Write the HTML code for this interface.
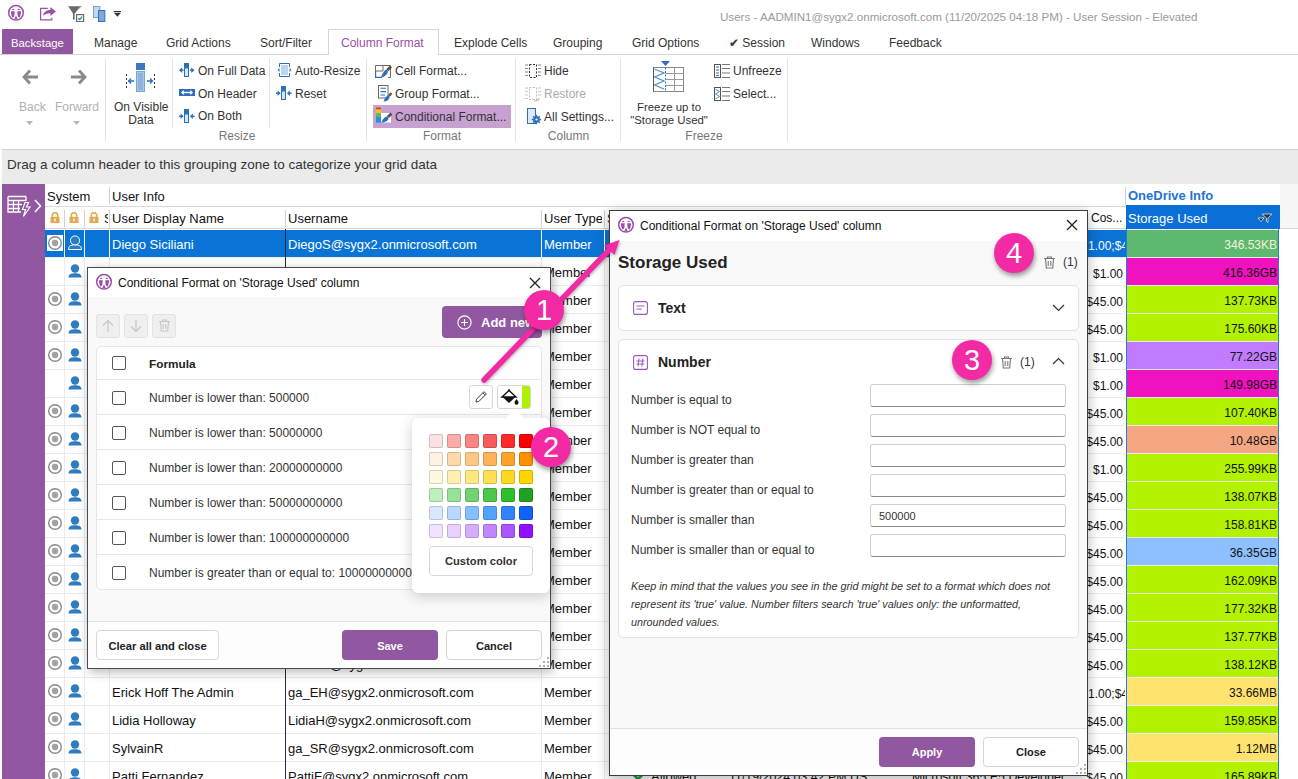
<!DOCTYPE html>
<html><head><meta charset="utf-8">
<style>
*{box-sizing:border-box;margin:0;padding:0}
html,body{width:1298px;height:779px;overflow:hidden;background:#fff;font-family:"Liberation Sans",sans-serif;color:#222}
.a{position:absolute;white-space:nowrap}
.t{position:absolute;white-space:nowrap;line-height:16px}
#title{left:720px;top:9px;font-size:11.6px;color:#9a9a9a}
.tab{position:absolute;top:35px;font-size:12px;color:#333;line-height:16px}
.rb{font-size:12px;color:#333;line-height:16px}
.gl{font-size:12px;color:#777;line-height:16px}
.sep{position:absolute;top:58px;width:1px;height:84px;background:#e2e2e2}
.grow{position:absolute;left:45px;width:1235px;height:28px;border-bottom:1px solid #e6e6e6}
.cell{position:absolute;top:0;height:28px;line-height:32px;font-size:13px;color:#111;white-space:nowrap;overflow:hidden}
.vl{position:absolute;top:0;width:1px;height:28px;background:#e6e6e6}
</style></head><body>

<!-- title bar -->
<div id="title" class="t">Users - AADMIN1@sygx2.onmicrosoft.com (11/20/2025 04:18 PM) - User Session - Elevated</div>

<!-- tabs -->
<div class="a" style="left:0;top:54px;width:1298px;height:1px;background:#d6d6d6"></div>
<div class="a" style="left:2px;top:29px;width:71px;height:25px;background:#9157a0"></div>
<div class="tab" style="left:11px;color:#fff;font-size:11.3px">Backstage</div>
<div class="tab" style="left:94px">Manage</div>
<div class="tab" style="left:166px">Grid Actions</div>
<div class="tab" style="left:260px">Sort/Filter</div>
<div class="a" style="left:328px;top:29px;width:111px;height:26px;background:#fff;border:1px solid #d6d6d6;border-bottom:none"></div>
<div class="tab" style="left:341px;color:#9b4fa8">Column Format</div>
<div class="tab" style="left:454px">Explode Cells</div>
<div class="tab" style="left:553px">Grouping</div>
<div class="tab" style="left:632px">Grid Options</div>
<div class="tab" style="left:729px">&#10004; Session</div>
<div class="tab" style="left:811px">Windows</div>
<div class="tab" style="left:889px">Feedback</div>

<!-- ribbon -->
<!-- quick access -->
<svg class="a" style="left:7px;top:4px" width="18" height="18" viewBox="0 0 18 18"><circle cx="9" cy="8.8" r="7.3" fill="none" stroke="#9b4fa8" stroke-width="1.5"/><g fill="#9b4fa8"><path d="M4.8 6 Q6.2 3.4 7.6 6Z M10.4 6 Q11.8 3.4 13.2 6Z"/><path d="M3.9 7.2 H7.8 L7.3 11.8 Q6.7 13.6 5.6 13.6 Q4.3 12.2 3.9 7.2Z M14.1 7.2 H10.2 L10.7 11.8 Q11.3 13.6 12.4 13.6 Q13.7 12.2 14.1 7.2Z"/><path d="M9 11.6 L10.6 15.1 H7.4Z"/></g></svg>
<svg class="a" style="left:40px;top:7px" width="17" height="14" viewBox="0 0 17 14"><path d="M0.6 1.4 H7.8 M0.6 0.9 V12.8 H11.8 V10.8" fill="none" stroke="#9b4fa8" stroke-width="1.2"/><path d="M2.8 9 C3.8 4.6 6.8 2.9 10.4 2.9 V0.1 L15.9 4.5 L10.4 9.1 V6.3 C7.4 6.3 5 6.9 2.8 9Z" fill="#9b4fa8"/></svg>
<svg class="a" style="left:68px;top:6px" width="17" height="16" viewBox="0 0 17 16"><path d="M0.2 0.2 H13.8 L6.6 7.5 V13.6 H5 V7.5 Z" fill="#6a6a6a"/><path d="M12.2 0.9 L13 0.9 L8.6 5.6 L8 5.6Z" fill="#fff"/><rect x="8.6" y="8.6" width="7" height="7" fill="#fff" stroke="#6a6a6a" stroke-width="1.2"/><path d="M10.2 12.2 L11.7 13.6 L14.2 10.6" fill="none" stroke="#1a9a60" stroke-width="1.4"/></svg>
<svg class="a" style="left:93px;top:6px" width="13" height="16" viewBox="0 0 13 16"><rect x="0.5" y="0.5" width="6.3" height="11" fill="#c5d6ec" stroke="#74a3da"/><rect x="5.5" y="4.5" width="6.3" height="11" fill="#7fa7da" stroke="#2f73c0"/></svg>
<svg class="a" style="left:113px;top:11px" width="9" height="7" viewBox="0 0 9 7"><rect x="0.7" y="0" width="7.3" height="1" fill="#333"/><path d="M0.9 1.8 H7.9 L4.4 5.8Z" fill="#333"/></svg>

<!-- ribbon: back/forward -->
<svg class="a" style="left:22px;top:69px" width="17" height="16" viewBox="0 0 17 16"><path d="M8 1.5 L2 8 L8 14.5 M2.5 8 H16" fill="none" stroke="#8a8a8a" stroke-width="2.8"/></svg>
<svg class="a" style="left:70px;top:69px" width="17" height="16" viewBox="0 0 17 16"><path d="M9 1.5 L15 8 L9 14.5 M14.5 8 H1" fill="none" stroke="#8a8a8a" stroke-width="2.8"/></svg>
<div class="t rb" style="left:19px;top:99px;color:#b4aeb4">Back</div>
<div class="t rb" style="left:55px;top:99px;color:#b4aeb4">Forward</div>
<svg class="a" style="left:26px;top:121px" width="7" height="4"><path d="M0 0 H7 L3.5 4Z" fill="#b8b8b8"/></svg>
<svg class="a" style="left:73px;top:121px" width="7" height="4"><path d="M0 0 H7 L3.5 4Z" fill="#b8b8b8"/></svg>
<div class="sep" style="left:105px"></div>

<!-- on visible data -->
<svg class="a" style="left:125px;top:62px" width="32" height="30" viewBox="0 0 32 30"><rect x="11" y="1" width="9" height="7" fill="#3a78c0"/><rect x="11.5" y="9.5" width="8" height="20" fill="#a9c5e8" stroke="#7aa5d8"/><rect x="13" y="11" width="5" height="17" fill="#8fb2de"/><path d="M1.5 12 V27" stroke="#333" stroke-width="1" stroke-dasharray="2 2"/><path d="M29.5 12 V27" stroke="#333" stroke-width="1" stroke-dasharray="2 2"/><path d="M4 19 H9 M6 16.5 L3.5 19 L6 21.5 M22 19 H27 M25 16.5 L27.5 19 L25 21.5" fill="none" stroke="#2d6fb8" stroke-width="1.3"/></svg>
<div class="t rb" style="left:114px;top:99px;width:54px;text-align:center">On Visible</div>
<div class="t rb" style="left:114px;top:112px;width:54px;text-align:center">Data</div>
<div class="sep" style="left:172px;top:58px;height:70px"></div>

<!-- resize group -->
<svg class="a" style="left:179px;top:63px" width="16" height="14" viewBox="0 0 16 14"><rect x="5.5" y="0.5" width="4" height="13" fill="#d2e8f8" stroke="#2d6fb8"/><rect x="5" y="0" width="5" height="5.5" fill="#2d6fb8"/><path d="M0 7.3 L3.2 4.5 V10.1Z M15.5 7.3 L12.3 4.5 V10.1Z" fill="#2d6fb8"/><path d="M2.5 7.3 H4.5 M11 7.3 H13" stroke="#2d6fb8" stroke-width="1.6"/></svg>
<div class="t rb" style="left:198px;top:63px">On Full Data</div>
<svg class="a" style="left:179px;top:89px" width="16" height="7" viewBox="0 0 16 7"><rect x="0" y="0" width="16" height="7" fill="#2d6fb8"/><path d="M3.5 3.5 H12.5" stroke="#fff" stroke-width="1.4"/><path d="M2 3.5 L4.8 1 V6Z M14 3.5 L11.2 1 V6Z" fill="#fff"/></svg>
<div class="t rb" style="left:198px;top:86px">On Header</div>
<svg class="a" style="left:179px;top:109px" width="16" height="14" viewBox="0 0 16 14"><rect x="5.5" y="0.5" width="4" height="13" fill="#d2e8f8" stroke="#2d6fb8"/><rect x="5" y="0" width="5" height="5.5" fill="#2d6fb8"/><path d="M4.6 7.3 L1.6 4.5 V10.1Z M10.9 7.3 L13.9 4.5 V10.1Z" fill="#2d6fb8"/><path d="M0 7.3 H2.5 M13 7.3 H15.5" stroke="#2d6fb8" stroke-width="1.6"/></svg>
<div class="t rb" style="left:198px;top:108px">On Both</div>
<div class="sep" style="left:269px;top:58px;height:70px"></div>
<svg class="a" style="left:277px;top:63px" width="15" height="14" viewBox="0 0 15 14"><path d="M2.5 4 V0.5 H12.5 V4 M2.5 10 V13.5 H12.5 V10" fill="none" stroke="#2d6fb8" stroke-width="1"/><rect x="4" y="2" width="7" height="10" fill="#bcd6f0"/><path d="M0.5 7 L2.5 5 V9Z M14.5 7 L12.5 5 V9Z" fill="#2d6fb8"/></svg>
<div class="t rb" style="left:295px;top:63px">Auto-Resize</div>
<svg class="a" style="left:276px;top:86px" width="16" height="14" viewBox="0 0 16 14"><rect x="5.5" y="0.5" width="4" height="13" fill="#d2e8f8" stroke="#2d6fb8"/><rect x="5" y="0" width="5" height="5.5" fill="#2d6fb8"/><path d="M4.6 7.3 L1.6 4.5 V10.1Z M10.9 7.3 L13.9 4.5 V10.1Z" fill="#2d6fb8"/><path d="M0 7.3 H2.5 M13 7.3 H15.5" stroke="#2d6fb8" stroke-width="1.6"/></svg>
<div class="t rb" style="left:295px;top:86px">Reset</div>
<div class="t gl" style="left:170px;top:128px;width:134px;text-align:center">Resize</div>
<div class="sep" style="left:366px"></div>

<!-- format group -->
<svg class="a" style="left:375px;top:65px" width="17" height="13" viewBox="0 0 17 13"><path d="M0.5 6 V0.5 H15.5 V12.5 H13 M8 0.5 V6 M0.5 6 H8" stroke="#6a6a6a" fill="none"/><path d="M0.6 6 V12.4 H7" stroke="#2f6db8" fill="none" stroke-width="1.2"/><path d="M16 1.5 L12.3 5.2" stroke="#555" stroke-width="3"/><path d="M11.3 4.6 L13 6.3 C12.5 9.3 10 12 5.8 12.6 C7 10 8.3 6.2 11.3 4.6Z" fill="#2f6db8"/></svg>
<div class="t rb" style="left:395px;top:63px">Cell Format...</div>
<svg class="a" style="left:377px;top:85px" width="15" height="17" viewBox="0 0 15 17"><rect x="1.5" y="0.5" width="9.5" height="12.5" fill="#fff" stroke="#6a6a6a"/><path d="M3.5 3.2 H9 M3.5 6.6 H9 M3.5 10 H8" stroke="#2f6db8" stroke-width="1.1"/><path d="M14.5 8 L12 11" stroke="#555" stroke-width="2.5"/><path d="M11 10.3 L12.7 12 C12.2 14.5 10 16.5 6.5 16.5 C7.5 14 9 11.3 11 10.3Z" fill="#2f6db8"/></svg>
<div class="t rb" style="left:395px;top:86px">Group Format...</div>
<div class="a" style="left:373px;top:105px;width:138px;height:23px;background:#c7a2d1"></div>
<svg class="a" style="left:376px;top:107px" width="16" height="16" viewBox="0 0 16 16"><rect x="0" y="0.6" width="5" height="1.8" fill="#e8262b"/><rect x="0" y="2.4" width="5" height="3.8" fill="#f7c500"/><rect x="0" y="6.2" width="5" height="3.8" fill="#5cb85c"/><rect x="0" y="10" width="5" height="5.6" fill="#2d8fe0"/><rect x="5" y="6" width="10" height="9.6" fill="#fff"/><path d="M15.5 6.5 L12 10" stroke="#555" stroke-width="3"/><path d="M11 9.3 L12.7 11 C12.2 13.5 9.5 15.6 5.3 15.6 C6.5 13 8 10.3 11 9.3Z" fill="#2f6db8"/></svg>
<div class="t rb" style="left:395px;top:109px">Conditional Format...</div>
<div class="t gl" style="left:373px;top:128px;width:138px;text-align:center">Format</div>
<div class="sep" style="left:515px"></div>

<!-- column group -->
<svg class="a" style="left:525px;top:64px" width="16" height="14" viewBox="0 0 16 14"><path d="M0 1 H3 M0 4.5 H3 M0 8 H3 M0 11.5 H3 M13 1 H16 M13 4.5 H16 M13 8 H16 M13 11.5 H16" stroke="#888" stroke-width="1"/><rect x="4.5" y="0.5" width="7" height="13" fill="none" stroke="#333" stroke-width="1" stroke-dasharray="2 1.5"/></svg>
<div class="t rb" style="left:544px;top:63px">Hide</div>
<svg class="a" style="left:525px;top:87px" width="16" height="15" viewBox="0 0 16 15"><path d="M0 1 H3 M0 4.5 H3 M0 8 H3 M0 11.5 H3 M13 1 H16 M13 4.5 H16 M13 8 H16" stroke="#c8c8c8" stroke-width="1"/><rect x="4.5" y="0.5" width="7" height="12" fill="none" stroke="#bbb" stroke-width="1" stroke-dasharray="2 1.5"/><path d="M9 14 C12 14 14 13 14 11" fill="none" stroke="#bbb" stroke-width="1.2"/></svg>
<div class="t rb" style="left:544px;top:86px;color:#aaa">Restore</div>
<svg class="a" style="left:527px;top:108px" width="14" height="17" viewBox="0 0 14 17"><rect x="0.5" y="0.5" width="8" height="15" fill="#dce9f7" stroke="#2d6fb8"/><circle cx="9.5" cy="11.5" r="3.3" fill="#2d6fb8"/><circle cx="9.5" cy="11.5" r="1.2" fill="#fff"/><path d="M9.5 6.8 V16.2 M4.8 11.5 H14 M6.2 8.2 L12.8 14.8 M12.8 8.2 L6.2 14.8" stroke="#2d6fb8" stroke-width="1.3"/><circle cx="9.5" cy="11.5" r="1.1" fill="#fff"/></svg>
<div class="t rb" style="left:544px;top:109px">All Settings...</div>
<div class="t gl" style="left:516px;top:128px;width:105px;text-align:center">Column</div>
<div class="sep" style="left:620px"></div>

<!-- freeze group -->
<svg class="a" style="left:653px;top:60px" width="32" height="33" viewBox="0 0 32 33"><path d="M8 1 H17 L12.5 6Z" fill="#2d6fb8"/><rect x="0.5" y="7.5" width="30" height="24" fill="#fff" stroke="#888"/><path d="M12.5 7.5 V31.5" stroke="#2d6fb8" stroke-width="1" stroke-dasharray="2 1.5"/><path d="M12.5 13.5 H30.5 M12.5 19.5 H30.5 M12.5 25.5 H30.5 M21.5 7.5 V31.5" stroke="#999" stroke-width="1"/><path d="M1.5 9 L11 13 L1.5 17 L11 21 L1.5 25 L11 29" fill="none" stroke="#4a8fd8" stroke-width="1.2"/><path d="M0.5 7.5 V31.5" stroke="#555"/></svg>
<div class="t rb" style="left:622px;top:99px;width:94px;text-align:center;font-size:11.4px">Freeze up to</div>
<div class="t rb" style="left:622px;top:112px;width:94px;text-align:center;font-size:11.4px">"Storage Used"</div>
<svg class="a" style="left:714px;top:64px" width="16" height="14" viewBox="0 0 16 14"><rect x="0.5" y="0.5" width="6" height="13" fill="#fff" stroke="#555"/><path d="M2 3 H5 M2 6 H5 M2 9 H5 M2 11.5 H5" stroke="#2d6fb8" stroke-width="1"/><path d="M8 0.5 H16 M8 4.5 H16 M8 9 H16 M8 13.5 H16" stroke="#777" stroke-width="1"/></svg>
<div class="t rb" style="left:733px;top:63px">Unfreeze</div>
<svg class="a" style="left:714px;top:87px" width="16" height="14" viewBox="0 0 16 14"><rect x="0.5" y="0.5" width="6" height="13" fill="#fff" stroke="#555"/><path d="M1.5 2.5 L5.5 4.5 L1.5 7 L5.5 9.5 L1.5 12" fill="none" stroke="#4a8fd8" stroke-width="1"/><path d="M8 0.5 H16 M8 4.5 H16 M8 9 H16 M8 13.5 H16" stroke="#777" stroke-width="1"/></svg>
<div class="t rb" style="left:733px;top:86px">Select...</div>
<div class="t gl" style="left:621px;top:128px;width:166px;text-align:center">Freeze</div>
<div class="sep" style="left:787px"></div>

<div class="a" style="left:2px;top:149px;width:1296px;height:1px;background:#d2d2d2"></div>

<!-- grouping zone -->
<div class="a" style="left:2px;top:150px;width:1296px;height:34px;background:#ebebeb"></div>
<div class="t" style="left:7px;top:157px;font-size:13.5px;color:#333">Drag a column header to this grouping zone to categorize your grid data</div>

<!-- grid -->
<div class="a" style="left:2px;top:184px;width:43px;height:595px;background:#9157a0"></div>
<svg class="a" style="left:7px;top:195px" width="36" height="23" viewBox="0 0 36 23"><path d="M1 1.5 H19 M1 1.5 V17 H14 M1 5.5 H19 M1 9.5 H15 M1 13.5 H13 M6.5 5.5 V17 M11.5 5.5 V17 M19 1.5 V6" fill="none" stroke="#fff" stroke-width="1.3"/><path d="M18 7.5 L21.5 7.5 L19.5 12 L23 12 L16.5 21.5 L18.5 14.5 L15.5 14.5Z" fill="none" stroke="#fff" stroke-width="1.2"/><path d="M28 5 L33.5 11 L28 17" fill="none" stroke="#fff" stroke-width="1.6"/></svg>
<div class="a" style="left:45px;top:184px;width:1253px;height:45px;background:#fff"></div>
<div class="a" style="left:1280px;top:184px;width:18px;height:45px;background:#f7f7f7"></div>
<div class="a" style="left:45px;top:206px;width:1235px;height:1px;background:#d9d9d9"></div>
<div class="a" style="left:45px;top:228px;width:1253px;height:1px;background:#d9d9d9"></div>
<div class="a" style="left:109px;top:187px;width:1px;height:17px;background:#d0d0d0"></div><div class="a" style="left:1125px;top:187px;width:1px;height:18px;background:#d0d0d0"></div>
<div class="cell" style="left:47px;top:184px;height:23px;line-height:25px">System</div>
<div class="cell" style="left:112px;top:184px;height:23px;line-height:25px">User Info</div>
<div class="cell" style="left:1128px;top:184px;height:23px;line-height:25px;font-weight:bold;color:#1f74d6;line-height:23px">OneDrive Info</div>
<svg class="a" style="left:50px;top:212px" width="10" height="11" viewBox="0 0 10 11"><path d="M2.3 5 V3.3 A2.7 2.7 0 0 1 7.7 3.3 V5" fill="none" stroke="#e4a955" stroke-width="1.6"/><rect x="0.5" y="4.8" width="9" height="6.2" fill="#e4a955"/><rect x="4.3" y="6.6" width="1.4" height="2.6" fill="#fff"/></svg>
<svg class="a" style="left:69px;top:212px" width="10" height="11" viewBox="0 0 10 11"><path d="M2.3 5 V3.3 A2.7 2.7 0 0 1 7.7 3.3 V5" fill="none" stroke="#e4a955" stroke-width="1.6"/><rect x="0.5" y="4.8" width="9" height="6.2" fill="#e4a955"/><rect x="4.3" y="6.6" width="1.4" height="2.6" fill="#fff"/></svg>
<svg class="a" style="left:89px;top:212px" width="10" height="11" viewBox="0 0 10 11"><path d="M2.3 5 V3.3 A2.7 2.7 0 0 1 7.7 3.3 V5" fill="none" stroke="#e4a955" stroke-width="1.6"/><rect x="0.5" y="4.8" width="9" height="6.2" fill="#e4a955"/><rect x="4.3" y="6.6" width="1.4" height="2.6" fill="#fff"/></svg>
<div class="cell" style="left:104px;top:206px;height:23px;line-height:25px;width:4px">S</div>
<div class="a" style="left:64px;top:210px;width:1px;height:17px;background:#d0d0d0"></div>
<div class="a" style="left:84px;top:210px;width:1px;height:17px;background:#d0d0d0"></div>
<div class="a" style="left:109px;top:210px;width:1px;height:17px;background:#d0d0d0"></div>
<div class="a" style="left:285px;top:210px;width:1px;height:17px;background:#d0d0d0"></div>
<div class="a" style="left:541px;top:210px;width:1px;height:17px;background:#d0d0d0"></div>
<div class="a" style="left:604px;top:210px;width:1px;height:17px;background:#d0d0d0"></div>
<div class="cell" style="left:112px;top:206px;height:22px;line-height:25px">User Display Name</div>
<div class="cell" style="left:288px;top:206px;height:22px;line-height:25px">Username</div>
<div class="cell" style="left:544px;top:206px;height:22px;line-height:25px;width:58px">User Type</div>
<div class="cell" style="left:607px;top:206px;height:22px;line-height:25px;width:10px">S</div>
<div class="cell" style="left:1091px;top:206px;height:22px;line-height:25px;font-size:12px">Cos...</div>
<div class="a" style="left:1126px;top:205px;width:154px;height:24px;background:#0a6fd6"></div>
<div class="cell" style="left:1128px;top:206px;height:22px;line-height:25px;color:#fff">Storage Used</div>
<svg class="a" style="left:1257px;top:213px" width="16" height="10" viewBox="0 0 16 10"><path d="M5 1 H15 L11 5 V9.5 L9.5 8.5 V5 Z" fill="#333" stroke="#ddd" stroke-width="0.8"/><path d="M1 5 H7 L4 8.5Z" fill="#222" stroke="#eee" stroke-width="0.8"/></svg>
<!--ROWS-->
<div class="a" style="left:45px;top:230px;width:1081px;height:27px;background:#0a74d6"></div><div class="a" style="left:45px;top:257px;width:1235px;height:1px;background:#ebebeb"></div><div class="a" style="left:64px;top:230px;width:1px;height:27px;background:#ffffff"></div><div class="a" style="left:84px;top:230px;width:1px;height:27px;background:#ffffff"></div><div class="a" style="left:109px;top:230px;width:1px;height:27px;background:#ffffff"></div><div class="a" style="left:541px;top:230px;width:1px;height:27px;background:#ffffff"></div><div class="a" style="left:604px;top:230px;width:1px;height:27px;background:#ffffff"></div><div class="a" style="left:47px;top:235px;width:16px;height:16px;background:#fff"></div><svg class="a" style="left:47px;top:235px" width="16" height="16" viewBox="0 0 16 16"><circle cx="8" cy="8" r="6.3" fill="none" stroke="#8a8a8a" stroke-width="1.4"/><circle cx="8" cy="8" r="3.2" fill="#a3a3a3"/></svg><svg class="a" style="left:67px;top:235px" width="16" height="16" viewBox="0 0 16 16"><circle cx="8" cy="5.5" r="4.6" fill="#2f7cc0" stroke="#fff" stroke-width="1"/><path d="M1.5 14.5 C1.5 10.5 4 10 8 10 C12 10 14.5 10.5 14.5 14.5Z" fill="#2f7cc0" stroke="#fff" stroke-width="1"/></svg><div class="cell" style="left:112px;top:230px;width:170px;line-height:30px;color:#fff">Diego Siciliani</div><div class="cell" style="left:288px;top:230px;width:250px;line-height:30px;color:#fff">DiegoS@sygx2.onmicrosoft.com</div><div class="cell" style="left:544px;top:230px;width:58px;line-height:30px;color:#fff">Member</div><div class="cell" style="left:1088px;top:230px;width:37px;line-height:32px;color:#fff;font-size:12px">1.00;$4</div><div class="a" style="left:1127px;top:230px;width:151px;height:27px;background:#5cb96f"></div><div class="cell" style="left:1127px;top:230px;width:150px;height:27px;line-height:31px;text-align:right;font-size:12px;color:#f4f4d8">346.53KB</div>
<div class="a" style="left:45px;top:258px;width:1081px;height:27px;background:#fff"></div><div class="a" style="left:45px;top:285px;width:1235px;height:1px;background:#ebebeb"></div><div class="a" style="left:64px;top:258px;width:1px;height:27px;background:#ebebeb"></div><div class="a" style="left:84px;top:258px;width:1px;height:27px;background:#ebebeb"></div><div class="a" style="left:109px;top:258px;width:1px;height:27px;background:#ebebeb"></div><div class="a" style="left:541px;top:258px;width:1px;height:27px;background:#ebebeb"></div><div class="a" style="left:604px;top:258px;width:1px;height:27px;background:#ebebeb"></div><svg class="a" style="left:67px;top:263px" width="16" height="16" viewBox="0 0 16 16"><circle cx="8" cy="5.5" r="4.2" fill="#2f7cc0"/><path d="M1.5 14.5 C1.5 11 4 10.2 8 10.2 C12 10.2 14.5 11 14.5 14.5Z" fill="#2f7cc0"/></svg><div class="cell" style="left:544px;top:258px;width:58px;line-height:30px;color:#111">Member</div><div class="cell" style="left:1060px;top:258px;width:63px;line-height:32px;text-align:right;color:#111;font-size:12px">$1.00</div><div class="a" style="left:1127px;top:258px;width:151px;height:27px;background:#f012be"></div><div class="cell" style="left:1127px;top:258px;width:150px;height:27px;line-height:31px;text-align:right;font-size:12px;color:#111">416.36GB</div>
<div class="a" style="left:45px;top:286px;width:1081px;height:27px;background:#fff"></div><div class="a" style="left:45px;top:313px;width:1235px;height:1px;background:#ebebeb"></div><div class="a" style="left:64px;top:286px;width:1px;height:27px;background:#ebebeb"></div><div class="a" style="left:84px;top:286px;width:1px;height:27px;background:#ebebeb"></div><div class="a" style="left:109px;top:286px;width:1px;height:27px;background:#ebebeb"></div><div class="a" style="left:541px;top:286px;width:1px;height:27px;background:#ebebeb"></div><div class="a" style="left:604px;top:286px;width:1px;height:27px;background:#ebebeb"></div><svg class="a" style="left:47px;top:291px" width="16" height="16" viewBox="0 0 16 16"><circle cx="8" cy="8" r="6.3" fill="none" stroke="#8a8a8a" stroke-width="1.4"/><circle cx="8" cy="8" r="3.2" fill="#a3a3a3"/></svg><svg class="a" style="left:67px;top:291px" width="16" height="16" viewBox="0 0 16 16"><circle cx="8" cy="5.5" r="4.2" fill="#2f7cc0"/><path d="M1.5 14.5 C1.5 11 4 10.2 8 10.2 C12 10.2 14.5 11 14.5 14.5Z" fill="#2f7cc0"/></svg><div class="cell" style="left:544px;top:286px;width:58px;line-height:30px;color:#111">Member</div><div class="cell" style="left:1060px;top:286px;width:63px;line-height:32px;text-align:right;color:#111;font-size:12px">$45.00</div><div class="a" style="left:1127px;top:286px;width:151px;height:27px;background:#b2f200"></div><div class="cell" style="left:1127px;top:286px;width:150px;height:27px;line-height:31px;text-align:right;font-size:12px;color:#111">137.73KB</div>
<div class="a" style="left:45px;top:314px;width:1081px;height:27px;background:#fff"></div><div class="a" style="left:45px;top:341px;width:1235px;height:1px;background:#ebebeb"></div><div class="a" style="left:64px;top:314px;width:1px;height:27px;background:#ebebeb"></div><div class="a" style="left:84px;top:314px;width:1px;height:27px;background:#ebebeb"></div><div class="a" style="left:109px;top:314px;width:1px;height:27px;background:#ebebeb"></div><div class="a" style="left:541px;top:314px;width:1px;height:27px;background:#ebebeb"></div><div class="a" style="left:604px;top:314px;width:1px;height:27px;background:#ebebeb"></div><svg class="a" style="left:47px;top:319px" width="16" height="16" viewBox="0 0 16 16"><circle cx="8" cy="8" r="6.3" fill="none" stroke="#8a8a8a" stroke-width="1.4"/><circle cx="8" cy="8" r="3.2" fill="#a3a3a3"/></svg><svg class="a" style="left:67px;top:319px" width="16" height="16" viewBox="0 0 16 16"><circle cx="8" cy="5.5" r="4.2" fill="#2f7cc0"/><path d="M1.5 14.5 C1.5 11 4 10.2 8 10.2 C12 10.2 14.5 11 14.5 14.5Z" fill="#2f7cc0"/></svg><div class="cell" style="left:544px;top:314px;width:58px;line-height:30px;color:#111">Member</div><div class="cell" style="left:1060px;top:314px;width:63px;line-height:32px;text-align:right;color:#111;font-size:12px">$45.00</div><div class="a" style="left:1127px;top:314px;width:151px;height:27px;background:#b2f200"></div><div class="cell" style="left:1127px;top:314px;width:150px;height:27px;line-height:31px;text-align:right;font-size:12px;color:#111">175.60KB</div>
<div class="a" style="left:45px;top:342px;width:1081px;height:27px;background:#fff"></div><div class="a" style="left:45px;top:369px;width:1235px;height:1px;background:#ebebeb"></div><div class="a" style="left:64px;top:342px;width:1px;height:27px;background:#ebebeb"></div><div class="a" style="left:84px;top:342px;width:1px;height:27px;background:#ebebeb"></div><div class="a" style="left:109px;top:342px;width:1px;height:27px;background:#ebebeb"></div><div class="a" style="left:541px;top:342px;width:1px;height:27px;background:#ebebeb"></div><div class="a" style="left:604px;top:342px;width:1px;height:27px;background:#ebebeb"></div><svg class="a" style="left:47px;top:347px" width="16" height="16" viewBox="0 0 16 16"><circle cx="8" cy="8" r="6.3" fill="none" stroke="#8a8a8a" stroke-width="1.4"/><circle cx="8" cy="8" r="3.2" fill="#a3a3a3"/></svg><svg class="a" style="left:67px;top:347px" width="16" height="16" viewBox="0 0 16 16"><circle cx="8" cy="5.5" r="4.2" fill="#2f7cc0"/><path d="M1.5 14.5 C1.5 11 4 10.2 8 10.2 C12 10.2 14.5 11 14.5 14.5Z" fill="#2f7cc0"/></svg><div class="cell" style="left:544px;top:342px;width:58px;line-height:30px;color:#111">Member</div><div class="cell" style="left:1060px;top:342px;width:63px;line-height:32px;text-align:right;color:#111;font-size:12px">$1.00</div><div class="a" style="left:1127px;top:342px;width:151px;height:27px;background:#c17bff"></div><div class="cell" style="left:1127px;top:342px;width:150px;height:27px;line-height:31px;text-align:right;font-size:12px;color:#111">77.22GB</div>
<div class="a" style="left:45px;top:370px;width:1081px;height:27px;background:#fff"></div><div class="a" style="left:45px;top:397px;width:1235px;height:1px;background:#ebebeb"></div><div class="a" style="left:64px;top:370px;width:1px;height:27px;background:#ebebeb"></div><div class="a" style="left:84px;top:370px;width:1px;height:27px;background:#ebebeb"></div><div class="a" style="left:109px;top:370px;width:1px;height:27px;background:#ebebeb"></div><div class="a" style="left:541px;top:370px;width:1px;height:27px;background:#ebebeb"></div><div class="a" style="left:604px;top:370px;width:1px;height:27px;background:#ebebeb"></div><svg class="a" style="left:67px;top:375px" width="16" height="16" viewBox="0 0 16 16"><circle cx="8" cy="5.5" r="4.2" fill="#2f7cc0"/><path d="M1.5 14.5 C1.5 11 4 10.2 8 10.2 C12 10.2 14.5 11 14.5 14.5Z" fill="#2f7cc0"/></svg><div class="cell" style="left:544px;top:370px;width:58px;line-height:30px;color:#111">Member</div><div class="cell" style="left:1060px;top:370px;width:63px;line-height:32px;text-align:right;color:#111;font-size:12px">$1.00</div><div class="a" style="left:1127px;top:370px;width:151px;height:27px;background:#f012be"></div><div class="cell" style="left:1127px;top:370px;width:150px;height:27px;line-height:31px;text-align:right;font-size:12px;color:#111">149.98GB</div>
<div class="a" style="left:45px;top:398px;width:1081px;height:27px;background:#fff"></div><div class="a" style="left:45px;top:425px;width:1235px;height:1px;background:#ebebeb"></div><div class="a" style="left:64px;top:398px;width:1px;height:27px;background:#ebebeb"></div><div class="a" style="left:84px;top:398px;width:1px;height:27px;background:#ebebeb"></div><div class="a" style="left:109px;top:398px;width:1px;height:27px;background:#ebebeb"></div><div class="a" style="left:541px;top:398px;width:1px;height:27px;background:#ebebeb"></div><div class="a" style="left:604px;top:398px;width:1px;height:27px;background:#ebebeb"></div><svg class="a" style="left:47px;top:403px" width="16" height="16" viewBox="0 0 16 16"><circle cx="8" cy="8" r="6.3" fill="none" stroke="#8a8a8a" stroke-width="1.4"/><circle cx="8" cy="8" r="3.2" fill="#a3a3a3"/></svg><svg class="a" style="left:67px;top:403px" width="16" height="16" viewBox="0 0 16 16"><circle cx="8" cy="5.5" r="4.2" fill="#2f7cc0"/><path d="M1.5 14.5 C1.5 11 4 10.2 8 10.2 C12 10.2 14.5 11 14.5 14.5Z" fill="#2f7cc0"/></svg><div class="cell" style="left:544px;top:398px;width:58px;line-height:30px;color:#111">Member</div><div class="cell" style="left:1060px;top:398px;width:63px;line-height:32px;text-align:right;color:#111;font-size:12px">$45.00</div><div class="a" style="left:1127px;top:398px;width:151px;height:27px;background:#b2f200"></div><div class="cell" style="left:1127px;top:398px;width:150px;height:27px;line-height:31px;text-align:right;font-size:12px;color:#111">107.40KB</div>
<div class="a" style="left:45px;top:426px;width:1081px;height:27px;background:#fff"></div><div class="a" style="left:45px;top:453px;width:1235px;height:1px;background:#ebebeb"></div><div class="a" style="left:64px;top:426px;width:1px;height:27px;background:#ebebeb"></div><div class="a" style="left:84px;top:426px;width:1px;height:27px;background:#ebebeb"></div><div class="a" style="left:109px;top:426px;width:1px;height:27px;background:#ebebeb"></div><div class="a" style="left:541px;top:426px;width:1px;height:27px;background:#ebebeb"></div><div class="a" style="left:604px;top:426px;width:1px;height:27px;background:#ebebeb"></div><svg class="a" style="left:47px;top:431px" width="16" height="16" viewBox="0 0 16 16"><circle cx="8" cy="8" r="6.3" fill="none" stroke="#8a8a8a" stroke-width="1.4"/><circle cx="8" cy="8" r="3.2" fill="#a3a3a3"/></svg><svg class="a" style="left:67px;top:431px" width="16" height="16" viewBox="0 0 16 16"><circle cx="8" cy="5.5" r="4.2" fill="#2f7cc0"/><path d="M1.5 14.5 C1.5 11 4 10.2 8 10.2 C12 10.2 14.5 11 14.5 14.5Z" fill="#2f7cc0"/></svg><div class="cell" style="left:544px;top:426px;width:58px;line-height:30px;color:#111">Member</div><div class="cell" style="left:1060px;top:426px;width:63px;line-height:32px;text-align:right;color:#111;font-size:12px">$45.00</div><div class="a" style="left:1127px;top:426px;width:151px;height:27px;background:#f4a582"></div><div class="cell" style="left:1127px;top:426px;width:150px;height:27px;line-height:31px;text-align:right;font-size:12px;color:#111">10.48GB</div>
<div class="a" style="left:45px;top:454px;width:1081px;height:27px;background:#fff"></div><div class="a" style="left:45px;top:481px;width:1235px;height:1px;background:#ebebeb"></div><div class="a" style="left:64px;top:454px;width:1px;height:27px;background:#ebebeb"></div><div class="a" style="left:84px;top:454px;width:1px;height:27px;background:#ebebeb"></div><div class="a" style="left:109px;top:454px;width:1px;height:27px;background:#ebebeb"></div><div class="a" style="left:541px;top:454px;width:1px;height:27px;background:#ebebeb"></div><div class="a" style="left:604px;top:454px;width:1px;height:27px;background:#ebebeb"></div><svg class="a" style="left:47px;top:459px" width="16" height="16" viewBox="0 0 16 16"><circle cx="8" cy="8" r="6.3" fill="none" stroke="#8a8a8a" stroke-width="1.4"/><circle cx="8" cy="8" r="3.2" fill="#a3a3a3"/></svg><svg class="a" style="left:67px;top:459px" width="16" height="16" viewBox="0 0 16 16"><circle cx="8" cy="5.5" r="4.2" fill="#2f7cc0"/><path d="M1.5 14.5 C1.5 11 4 10.2 8 10.2 C12 10.2 14.5 11 14.5 14.5Z" fill="#2f7cc0"/></svg><div class="cell" style="left:544px;top:454px;width:58px;line-height:30px;color:#111">Member</div><div class="cell" style="left:1060px;top:454px;width:63px;line-height:32px;text-align:right;color:#111;font-size:12px">$1.00</div><div class="a" style="left:1127px;top:454px;width:151px;height:27px;background:#b2f200"></div><div class="cell" style="left:1127px;top:454px;width:150px;height:27px;line-height:31px;text-align:right;font-size:12px;color:#111">255.99KB</div>
<div class="a" style="left:45px;top:482px;width:1081px;height:27px;background:#fff"></div><div class="a" style="left:45px;top:509px;width:1235px;height:1px;background:#ebebeb"></div><div class="a" style="left:64px;top:482px;width:1px;height:27px;background:#ebebeb"></div><div class="a" style="left:84px;top:482px;width:1px;height:27px;background:#ebebeb"></div><div class="a" style="left:109px;top:482px;width:1px;height:27px;background:#ebebeb"></div><div class="a" style="left:541px;top:482px;width:1px;height:27px;background:#ebebeb"></div><div class="a" style="left:604px;top:482px;width:1px;height:27px;background:#ebebeb"></div><svg class="a" style="left:47px;top:487px" width="16" height="16" viewBox="0 0 16 16"><circle cx="8" cy="8" r="6.3" fill="none" stroke="#8a8a8a" stroke-width="1.4"/><circle cx="8" cy="8" r="3.2" fill="#a3a3a3"/></svg><svg class="a" style="left:67px;top:487px" width="16" height="16" viewBox="0 0 16 16"><circle cx="8" cy="5.5" r="4.2" fill="#2f7cc0"/><path d="M1.5 14.5 C1.5 11 4 10.2 8 10.2 C12 10.2 14.5 11 14.5 14.5Z" fill="#2f7cc0"/></svg><div class="cell" style="left:544px;top:482px;width:58px;line-height:30px;color:#111">Member</div><div class="cell" style="left:1060px;top:482px;width:63px;line-height:32px;text-align:right;color:#111;font-size:12px">$45.00</div><div class="a" style="left:1127px;top:482px;width:151px;height:27px;background:#b2f200"></div><div class="cell" style="left:1127px;top:482px;width:150px;height:27px;line-height:31px;text-align:right;font-size:12px;color:#111">138.07KB</div>
<div class="a" style="left:45px;top:510px;width:1081px;height:27px;background:#fff"></div><div class="a" style="left:45px;top:537px;width:1235px;height:1px;background:#ebebeb"></div><div class="a" style="left:64px;top:510px;width:1px;height:27px;background:#ebebeb"></div><div class="a" style="left:84px;top:510px;width:1px;height:27px;background:#ebebeb"></div><div class="a" style="left:109px;top:510px;width:1px;height:27px;background:#ebebeb"></div><div class="a" style="left:541px;top:510px;width:1px;height:27px;background:#ebebeb"></div><div class="a" style="left:604px;top:510px;width:1px;height:27px;background:#ebebeb"></div><svg class="a" style="left:47px;top:515px" width="16" height="16" viewBox="0 0 16 16"><circle cx="8" cy="8" r="6.3" fill="none" stroke="#8a8a8a" stroke-width="1.4"/><circle cx="8" cy="8" r="3.2" fill="#a3a3a3"/></svg><svg class="a" style="left:67px;top:515px" width="16" height="16" viewBox="0 0 16 16"><circle cx="8" cy="5.5" r="4.2" fill="#2f7cc0"/><path d="M1.5 14.5 C1.5 11 4 10.2 8 10.2 C12 10.2 14.5 11 14.5 14.5Z" fill="#2f7cc0"/></svg><div class="cell" style="left:544px;top:510px;width:58px;line-height:30px;color:#111">Member</div><div class="cell" style="left:1060px;top:510px;width:63px;line-height:32px;text-align:right;color:#111;font-size:12px">$45.00</div><div class="a" style="left:1127px;top:510px;width:151px;height:27px;background:#b2f200"></div><div class="cell" style="left:1127px;top:510px;width:150px;height:27px;line-height:31px;text-align:right;font-size:12px;color:#111">158.81KB</div>
<div class="a" style="left:45px;top:538px;width:1081px;height:27px;background:#fff"></div><div class="a" style="left:45px;top:565px;width:1235px;height:1px;background:#ebebeb"></div><div class="a" style="left:64px;top:538px;width:1px;height:27px;background:#ebebeb"></div><div class="a" style="left:84px;top:538px;width:1px;height:27px;background:#ebebeb"></div><div class="a" style="left:109px;top:538px;width:1px;height:27px;background:#ebebeb"></div><div class="a" style="left:541px;top:538px;width:1px;height:27px;background:#ebebeb"></div><div class="a" style="left:604px;top:538px;width:1px;height:27px;background:#ebebeb"></div><svg class="a" style="left:47px;top:543px" width="16" height="16" viewBox="0 0 16 16"><circle cx="8" cy="8" r="6.3" fill="none" stroke="#8a8a8a" stroke-width="1.4"/><circle cx="8" cy="8" r="3.2" fill="#a3a3a3"/></svg><svg class="a" style="left:67px;top:543px" width="16" height="16" viewBox="0 0 16 16"><circle cx="8" cy="5.5" r="4.2" fill="#2f7cc0"/><path d="M1.5 14.5 C1.5 11 4 10.2 8 10.2 C12 10.2 14.5 11 14.5 14.5Z" fill="#2f7cc0"/></svg><div class="cell" style="left:544px;top:538px;width:58px;line-height:30px;color:#111">Member</div><div class="cell" style="left:1060px;top:538px;width:63px;line-height:32px;text-align:right;color:#111;font-size:12px">$45.00</div><div class="a" style="left:1127px;top:538px;width:151px;height:27px;background:#8ec0ff"></div><div class="cell" style="left:1127px;top:538px;width:150px;height:27px;line-height:31px;text-align:right;font-size:12px;color:#111">36.35GB</div>
<div class="a" style="left:45px;top:566px;width:1081px;height:27px;background:#fff"></div><div class="a" style="left:45px;top:593px;width:1235px;height:1px;background:#ebebeb"></div><div class="a" style="left:64px;top:566px;width:1px;height:27px;background:#ebebeb"></div><div class="a" style="left:84px;top:566px;width:1px;height:27px;background:#ebebeb"></div><div class="a" style="left:109px;top:566px;width:1px;height:27px;background:#ebebeb"></div><div class="a" style="left:541px;top:566px;width:1px;height:27px;background:#ebebeb"></div><div class="a" style="left:604px;top:566px;width:1px;height:27px;background:#ebebeb"></div><svg class="a" style="left:47px;top:571px" width="16" height="16" viewBox="0 0 16 16"><circle cx="8" cy="8" r="6.3" fill="none" stroke="#8a8a8a" stroke-width="1.4"/><circle cx="8" cy="8" r="3.2" fill="#a3a3a3"/></svg><svg class="a" style="left:67px;top:571px" width="16" height="16" viewBox="0 0 16 16"><circle cx="8" cy="5.5" r="4.2" fill="#2f7cc0"/><path d="M1.5 14.5 C1.5 11 4 10.2 8 10.2 C12 10.2 14.5 11 14.5 14.5Z" fill="#2f7cc0"/></svg><div class="cell" style="left:544px;top:566px;width:58px;line-height:30px;color:#111">Member</div><div class="cell" style="left:1060px;top:566px;width:63px;line-height:32px;text-align:right;color:#111;font-size:12px">$45.00</div><div class="a" style="left:1127px;top:566px;width:151px;height:27px;background:#b2f200"></div><div class="cell" style="left:1127px;top:566px;width:150px;height:27px;line-height:31px;text-align:right;font-size:12px;color:#111">162.09KB</div>
<div class="a" style="left:45px;top:594px;width:1081px;height:27px;background:#fff"></div><div class="a" style="left:45px;top:621px;width:1235px;height:1px;background:#ebebeb"></div><div class="a" style="left:64px;top:594px;width:1px;height:27px;background:#ebebeb"></div><div class="a" style="left:84px;top:594px;width:1px;height:27px;background:#ebebeb"></div><div class="a" style="left:109px;top:594px;width:1px;height:27px;background:#ebebeb"></div><div class="a" style="left:541px;top:594px;width:1px;height:27px;background:#ebebeb"></div><div class="a" style="left:604px;top:594px;width:1px;height:27px;background:#ebebeb"></div><svg class="a" style="left:47px;top:599px" width="16" height="16" viewBox="0 0 16 16"><circle cx="8" cy="8" r="6.3" fill="none" stroke="#8a8a8a" stroke-width="1.4"/><circle cx="8" cy="8" r="3.2" fill="#a3a3a3"/></svg><svg class="a" style="left:67px;top:599px" width="16" height="16" viewBox="0 0 16 16"><circle cx="8" cy="5.5" r="4.2" fill="#2f7cc0"/><path d="M1.5 14.5 C1.5 11 4 10.2 8 10.2 C12 10.2 14.5 11 14.5 14.5Z" fill="#2f7cc0"/></svg><div class="cell" style="left:544px;top:594px;width:58px;line-height:30px;color:#111">Member</div><div class="cell" style="left:1060px;top:594px;width:63px;line-height:32px;text-align:right;color:#111;font-size:12px">$45.00</div><div class="a" style="left:1127px;top:594px;width:151px;height:27px;background:#b2f200"></div><div class="cell" style="left:1127px;top:594px;width:150px;height:27px;line-height:31px;text-align:right;font-size:12px;color:#111">177.32KB</div>
<div class="a" style="left:45px;top:622px;width:1081px;height:27px;background:#fff"></div><div class="a" style="left:45px;top:649px;width:1235px;height:1px;background:#ebebeb"></div><div class="a" style="left:64px;top:622px;width:1px;height:27px;background:#ebebeb"></div><div class="a" style="left:84px;top:622px;width:1px;height:27px;background:#ebebeb"></div><div class="a" style="left:109px;top:622px;width:1px;height:27px;background:#ebebeb"></div><div class="a" style="left:541px;top:622px;width:1px;height:27px;background:#ebebeb"></div><div class="a" style="left:604px;top:622px;width:1px;height:27px;background:#ebebeb"></div><svg class="a" style="left:47px;top:627px" width="16" height="16" viewBox="0 0 16 16"><circle cx="8" cy="8" r="6.3" fill="none" stroke="#8a8a8a" stroke-width="1.4"/><circle cx="8" cy="8" r="3.2" fill="#a3a3a3"/></svg><svg class="a" style="left:67px;top:627px" width="16" height="16" viewBox="0 0 16 16"><circle cx="8" cy="5.5" r="4.2" fill="#2f7cc0"/><path d="M1.5 14.5 C1.5 11 4 10.2 8 10.2 C12 10.2 14.5 11 14.5 14.5Z" fill="#2f7cc0"/></svg><div class="cell" style="left:544px;top:622px;width:58px;line-height:30px;color:#111">Member</div><div class="cell" style="left:1060px;top:622px;width:63px;line-height:32px;text-align:right;color:#111;font-size:12px">$45.00</div><div class="a" style="left:1127px;top:622px;width:151px;height:27px;background:#b2f200"></div><div class="cell" style="left:1127px;top:622px;width:150px;height:27px;line-height:31px;text-align:right;font-size:12px;color:#111">137.77KB</div>
<div class="a" style="left:45px;top:650px;width:1081px;height:27px;background:#fff"></div><div class="a" style="left:45px;top:677px;width:1235px;height:1px;background:#ebebeb"></div><div class="a" style="left:64px;top:650px;width:1px;height:27px;background:#ebebeb"></div><div class="a" style="left:84px;top:650px;width:1px;height:27px;background:#ebebeb"></div><div class="a" style="left:109px;top:650px;width:1px;height:27px;background:#ebebeb"></div><div class="a" style="left:541px;top:650px;width:1px;height:27px;background:#ebebeb"></div><div class="a" style="left:604px;top:650px;width:1px;height:27px;background:#ebebeb"></div><svg class="a" style="left:47px;top:655px" width="16" height="16" viewBox="0 0 16 16"><circle cx="8" cy="8" r="6.3" fill="none" stroke="#8a8a8a" stroke-width="1.4"/><circle cx="8" cy="8" r="3.2" fill="#a3a3a3"/></svg><svg class="a" style="left:67px;top:655px" width="16" height="16" viewBox="0 0 16 16"><circle cx="8" cy="5.5" r="4.2" fill="#2f7cc0"/><path d="M1.5 14.5 C1.5 11 4 10.2 8 10.2 C12 10.2 14.5 11 14.5 14.5Z" fill="#2f7cc0"/></svg><div class="cell" style="left:112px;top:650px;width:170px;line-height:30px;color:#111">Adele Vance</div><div class="cell" style="left:288px;top:650px;width:250px;line-height:30px;color:#111">AdeleV@sygx2.onmicrosoft.com</div><div class="cell" style="left:544px;top:650px;width:58px;line-height:30px;color:#111">Member</div><div class="cell" style="left:1060px;top:650px;width:63px;line-height:32px;text-align:right;color:#111;font-size:12px">$45.00</div><div class="a" style="left:1127px;top:650px;width:151px;height:27px;background:#b2f200"></div><div class="cell" style="left:1127px;top:650px;width:150px;height:27px;line-height:31px;text-align:right;font-size:12px;color:#111">138.12KB</div>
<div class="a" style="left:45px;top:678px;width:1081px;height:27px;background:#fff"></div><div class="a" style="left:45px;top:705px;width:1235px;height:1px;background:#ebebeb"></div><div class="a" style="left:64px;top:678px;width:1px;height:27px;background:#ebebeb"></div><div class="a" style="left:84px;top:678px;width:1px;height:27px;background:#ebebeb"></div><div class="a" style="left:109px;top:678px;width:1px;height:27px;background:#ebebeb"></div><div class="a" style="left:541px;top:678px;width:1px;height:27px;background:#ebebeb"></div><div class="a" style="left:604px;top:678px;width:1px;height:27px;background:#ebebeb"></div><svg class="a" style="left:47px;top:683px" width="16" height="16" viewBox="0 0 16 16"><circle cx="8" cy="8" r="6.3" fill="none" stroke="#8a8a8a" stroke-width="1.4"/><circle cx="8" cy="8" r="3.2" fill="#a3a3a3"/></svg><svg class="a" style="left:67px;top:683px" width="16" height="16" viewBox="0 0 16 16"><circle cx="8" cy="5.5" r="4.2" fill="#2f7cc0"/><path d="M1.5 14.5 C1.5 11 4 10.2 8 10.2 C12 10.2 14.5 11 14.5 14.5Z" fill="#2f7cc0"/></svg><div class="cell" style="left:112px;top:678px;width:170px;line-height:30px;color:#111">Erick Hoff The Admin</div><div class="cell" style="left:288px;top:678px;width:250px;line-height:30px;color:#111">ga_EH@sygx2.onmicrosoft.com</div><div class="cell" style="left:544px;top:678px;width:58px;line-height:30px;color:#111">Member</div><div class="cell" style="left:1088px;top:678px;width:37px;line-height:32px;color:#111;font-size:12px">1.00;$4</div><div class="a" style="left:1127px;top:678px;width:151px;height:27px;background:#ffe36e"></div><div class="cell" style="left:1127px;top:678px;width:150px;height:27px;line-height:31px;text-align:right;font-size:12px;color:#111">33.66MB</div>
<div class="a" style="left:45px;top:706px;width:1081px;height:27px;background:#fff"></div><div class="a" style="left:45px;top:733px;width:1235px;height:1px;background:#ebebeb"></div><div class="a" style="left:64px;top:706px;width:1px;height:27px;background:#ebebeb"></div><div class="a" style="left:84px;top:706px;width:1px;height:27px;background:#ebebeb"></div><div class="a" style="left:109px;top:706px;width:1px;height:27px;background:#ebebeb"></div><div class="a" style="left:541px;top:706px;width:1px;height:27px;background:#ebebeb"></div><div class="a" style="left:604px;top:706px;width:1px;height:27px;background:#ebebeb"></div><svg class="a" style="left:47px;top:711px" width="16" height="16" viewBox="0 0 16 16"><circle cx="8" cy="8" r="6.3" fill="none" stroke="#8a8a8a" stroke-width="1.4"/><circle cx="8" cy="8" r="3.2" fill="#a3a3a3"/></svg><svg class="a" style="left:67px;top:711px" width="16" height="16" viewBox="0 0 16 16"><circle cx="8" cy="5.5" r="4.2" fill="#2f7cc0"/><path d="M1.5 14.5 C1.5 11 4 10.2 8 10.2 C12 10.2 14.5 11 14.5 14.5Z" fill="#2f7cc0"/></svg><div class="cell" style="left:112px;top:706px;width:170px;line-height:30px;color:#111">Lidia Holloway</div><div class="cell" style="left:288px;top:706px;width:250px;line-height:30px;color:#111">LidiaH@sygx2.onmicrosoft.com</div><div class="cell" style="left:544px;top:706px;width:58px;line-height:30px;color:#111">Member</div><div class="cell" style="left:1060px;top:706px;width:63px;line-height:32px;text-align:right;color:#111;font-size:12px">$45.00</div><div class="a" style="left:1127px;top:706px;width:151px;height:27px;background:#b2f200"></div><div class="cell" style="left:1127px;top:706px;width:150px;height:27px;line-height:31px;text-align:right;font-size:12px;color:#111">159.85KB</div>
<div class="a" style="left:45px;top:734px;width:1081px;height:27px;background:#fff"></div><div class="a" style="left:45px;top:761px;width:1235px;height:1px;background:#ebebeb"></div><div class="a" style="left:64px;top:734px;width:1px;height:27px;background:#ebebeb"></div><div class="a" style="left:84px;top:734px;width:1px;height:27px;background:#ebebeb"></div><div class="a" style="left:109px;top:734px;width:1px;height:27px;background:#ebebeb"></div><div class="a" style="left:541px;top:734px;width:1px;height:27px;background:#ebebeb"></div><div class="a" style="left:604px;top:734px;width:1px;height:27px;background:#ebebeb"></div><svg class="a" style="left:47px;top:739px" width="16" height="16" viewBox="0 0 16 16"><circle cx="8" cy="8" r="6.3" fill="none" stroke="#8a8a8a" stroke-width="1.4"/><circle cx="8" cy="8" r="3.2" fill="#a3a3a3"/></svg><svg class="a" style="left:67px;top:739px" width="16" height="16" viewBox="0 0 16 16"><circle cx="8" cy="5.5" r="4.2" fill="#2f7cc0"/><path d="M1.5 14.5 C1.5 11 4 10.2 8 10.2 C12 10.2 14.5 11 14.5 14.5Z" fill="#2f7cc0"/></svg><div class="cell" style="left:112px;top:734px;width:170px;line-height:30px;color:#111">SylvainR</div><div class="cell" style="left:288px;top:734px;width:250px;line-height:30px;color:#111">ga_SR@sygx2.onmicrosoft.com</div><div class="cell" style="left:544px;top:734px;width:58px;line-height:30px;color:#111">Member</div><div class="cell" style="left:1060px;top:734px;width:63px;line-height:32px;text-align:right;color:#111;font-size:12px">$45.00</div><div class="a" style="left:1127px;top:734px;width:151px;height:27px;background:#ffe36e"></div><div class="cell" style="left:1127px;top:734px;width:150px;height:27px;line-height:31px;text-align:right;font-size:12px;color:#111">1.12MB</div>
<div class="a" style="left:45px;top:762px;width:1081px;height:27px;background:#fff"></div><div class="a" style="left:45px;top:789px;width:1235px;height:1px;background:#ebebeb"></div><div class="a" style="left:64px;top:762px;width:1px;height:27px;background:#ebebeb"></div><div class="a" style="left:84px;top:762px;width:1px;height:27px;background:#ebebeb"></div><div class="a" style="left:109px;top:762px;width:1px;height:27px;background:#ebebeb"></div><div class="a" style="left:541px;top:762px;width:1px;height:27px;background:#ebebeb"></div><div class="a" style="left:604px;top:762px;width:1px;height:27px;background:#ebebeb"></div><svg class="a" style="left:47px;top:767px" width="16" height="16" viewBox="0 0 16 16"><circle cx="8" cy="8" r="6.3" fill="none" stroke="#8a8a8a" stroke-width="1.4"/><circle cx="8" cy="8" r="3.2" fill="#a3a3a3"/></svg><svg class="a" style="left:67px;top:767px" width="16" height="16" viewBox="0 0 16 16"><circle cx="8" cy="5.5" r="4.2" fill="#2f7cc0"/><path d="M1.5 14.5 C1.5 11 4 10.2 8 10.2 C12 10.2 14.5 11 14.5 14.5Z" fill="#2f7cc0"/></svg><div class="cell" style="left:112px;top:762px;width:170px;line-height:30px;color:#111">Patti Fernandez</div><div class="cell" style="left:288px;top:762px;width:250px;line-height:30px;color:#111">PattiF@sygx2.onmicrosoft.com</div><div class="cell" style="left:544px;top:762px;width:58px;line-height:30px;color:#111">Member</div><div class="cell" style="left:651px;top:762px;line-height:30px;color:#111">Allowed</div><svg class="a" style="left:633px;top:768px" width="14" height="14"><path d="M1 7 L5 11 L13 3" fill="none" stroke="#1e9e4a" stroke-width="3"/></svg><div class="cell" style="left:729px;top:762px;line-height:30px;font-size:12.4px;color:#111">11/19/2024 03:42 PM US</div><div class="cell" style="left:912px;top:762px;line-height:30px;font-size:12.4px;color:#111">Microsoft 365 E5 Developer</div><div class="cell" style="left:1060px;top:762px;width:63px;line-height:32px;text-align:right;color:#111;font-size:12px">$45.00</div><div class="a" style="left:1127px;top:762px;width:151px;height:27px;background:#b2f200"></div><div class="cell" style="left:1127px;top:762px;width:150px;height:27px;line-height:31px;text-align:right;font-size:12px;color:#111">165.89KB</div>
<!--/ROWS-->
<div class="a" style="left:285px;top:229px;width:1px;height:550px;background:#1f2d3d"></div>
<div class="a" style="left:1278px;top:229px;width:1px;height:550px;background:#2a7ad8"></div><div class="a" style="left:1126px;top:229px;width:1px;height:550px;background:#2a7ad8"></div>



<!-- LEFT DIALOG -->
<div class="a" style="left:87px;top:267px;width:464px;height:402px;background:#f9f9f9;border:1px solid #4a4a4a;box-shadow:2px 3px 10px rgba(0,0,0,0.28)"></div>
<div class="a" style="left:88px;top:268px;width:462px;height:29px;background:#fff"></div>
<svg class="a" style="left:95px;top:273px" width="18" height="18" viewBox="0 0 18 18"><circle cx="9" cy="8.8" r="7.3" fill="none" stroke="#9b4fa8" stroke-width="1.5"/><g fill="#9b4fa8"><path d="M4.8 6 Q6.2 3.4 7.6 6Z M10.4 6 Q11.8 3.4 13.2 6Z"/><path d="M3.9 7.2 H7.8 L7.3 11.8 Q6.7 13.6 5.6 13.6 Q4.3 12.2 3.9 7.2Z M14.1 7.2 H10.2 L10.7 11.8 Q11.3 13.6 12.4 13.6 Q13.7 12.2 14.1 7.2Z"/><path d="M9 11.6 L10.6 15.1 H7.4Z"/></g></svg>
<div class="t" style="left:118px;top:275px;font-size:12px;color:#111">Conditional Format on 'Storage Used' column</div>
<svg class="a" style="left:529px;top:277px" width="12" height="12" viewBox="0 0 12 12"><path d="M1 1 L11 11 M11 1 L1 11" stroke="#222" stroke-width="1.3"/></svg>
<div class="a" style="left:96px;top:314px;width:24px;height:24px;background:#efefef;border:1px solid #e3e3e3;border-radius:3px"></div>
<div class="a" style="left:124px;top:314px;width:24px;height:24px;background:#efefef;border:1px solid #e3e3e3;border-radius:3px"></div>
<div class="a" style="left:152px;top:314px;width:24px;height:24px;background:#efefef;border:1px solid #e3e3e3;border-radius:3px"></div>
<svg class="a" style="left:100px;top:318px" width="16" height="16" viewBox="0 0 16 16"><path d="M8 2.5 V14 M3 7.5 L8 2.5 L13 7.5" fill="none" stroke="#c6c6c6" stroke-width="1.2"/></svg>
<svg class="a" style="left:128px;top:318px" width="16" height="16" viewBox="0 0 16 16"><path d="M8 2 V13.5 M3 8.5 L8 13.5 L13 8.5" fill="none" stroke="#c6c6c6" stroke-width="1.2"/></svg>
<svg class="a" style="left:158px;top:319px" width="13" height="13" viewBox="0 0 13 13"><path d="M1 2.5 H12 M4.5 2.5 V1 H8.5 V2.5 M2.5 2.5 L3.3 12 H9.7 L10.5 2.5 M5.2 5 V10 M7.8 5 V10" fill="none" stroke="#c6c6c6" stroke-width="1.1"/></svg>
<div class="a" style="left:442px;top:306px;width:100px;height:32px;background:#9157a0;border-radius:4px"></div>
<svg class="a" style="left:457px;top:315px" width="15" height="15" viewBox="0 0 15 15"><circle cx="7.5" cy="7.5" r="6.6" fill="none" stroke="#fff" stroke-width="1.1"/><path d="M7.5 4 V11 M4 7.5 H11" stroke="#fff" stroke-width="1.1"/></svg>
<div class="t" style="left:481px;top:315px;font-size:13px;font-weight:bold;color:#fff">Add new</div>
<div class="a" style="left:96px;top:346px;width:446px;height:244px;background:#fff;border:1px solid #e6e6e6;border-radius:5px"></div>
<div class="a" style="left:112px;top:356px;width:14px;height:14px;border:1.2px solid #555;border-radius:2px;background:#fff"></div>
<div class="t" style="left:149px;top:356px;font-size:11.8px;font-weight:bold;color:#222">Formula</div>
<div class="a" style="left:97px;top:379px;width:444px;height:1px;background:#e8e8e8"></div><div class="a" style="left:112px;top:391px;width:14px;height:14px;border:1.2px solid #555;border-radius:2px;background:#fff"></div><div class="t" style="left:149px;top:390px;font-size:12px;color:#333">Number is lower than: 500000</div><div class="a" style="left:97px;top:414px;width:444px;height:1px;background:#e8e8e8"></div><div class="a" style="left:112px;top:426px;width:14px;height:14px;border:1.2px solid #555;border-radius:2px;background:#fff"></div><div class="t" style="left:149px;top:425px;font-size:12px;color:#333">Number is lower than: 50000000</div><div class="a" style="left:97px;top:449px;width:444px;height:1px;background:#e8e8e8"></div><div class="a" style="left:112px;top:461px;width:14px;height:14px;border:1.2px solid #555;border-radius:2px;background:#fff"></div><div class="t" style="left:149px;top:460px;font-size:12px;color:#333">Number is lower than: 20000000000</div><div class="a" style="left:97px;top:484px;width:444px;height:1px;background:#e8e8e8"></div><div class="a" style="left:112px;top:496px;width:14px;height:14px;border:1.2px solid #555;border-radius:2px;background:#fff"></div><div class="t" style="left:149px;top:495px;font-size:12px;color:#333">Number is lower than: 50000000000</div><div class="a" style="left:97px;top:519px;width:444px;height:1px;background:#e8e8e8"></div><div class="a" style="left:112px;top:531px;width:14px;height:14px;border:1.2px solid #555;border-radius:2px;background:#fff"></div><div class="t" style="left:149px;top:530px;font-size:12px;color:#333">Number is lower than: 100000000000</div><div class="a" style="left:97px;top:554px;width:444px;height:1px;background:#e8e8e8"></div><div class="a" style="left:112px;top:566px;width:14px;height:14px;border:1.2px solid #555;border-radius:2px;background:#fff"></div><div class="t" style="left:149px;top:565px;font-size:12px;color:#333">Number is greater than or equal to: 100000000000</div>
<div class="a" style="left:469px;top:385px;width:24px;height:24px;background:#fff;border:1px solid #d6d6d6;border-radius:3px"></div>
<svg class="a" style="left:473px;top:389px" width="16" height="16" viewBox="0 0 16 16"><path d="M3 13 L3.5 10.2 L11 2.7 L13.3 5 L5.8 12.5 Z M9.8 3.9 L12.1 6.2" fill="none" stroke="#444" stroke-width="1"/></svg>
<div class="a" style="left:497px;top:385px;width:34px;height:24px;background:#fff;border:1px solid #d6d6d6;border-radius:3px;overflow:hidden"><div class="a" style="left:24px;top:0;width:9px;height:22px;background:#aff000"></div></div>
<svg class="a" style="left:500px;top:387px" width="20" height="20" viewBox="0 0 20 20"><path d="M9 2 L9 5" stroke="#111" stroke-width="1.2"/><path d="M2 10 L9 3.5 L16 10 Z" fill="#fff" stroke="#111" stroke-width="1.4"/><path d="M2.5 10 L15.5 10 L9 16 Z" fill="#111"/><path d="M16.5 12 C17.5 13.5 18.5 14.5 18.5 15.8 A2 2 0 0 1 14.5 15.8 C14.5 14.5 15.5 13.5 16.5 12Z" fill="#111"/></svg>
<div class="a" style="left:88px;top:621px;width:462px;height:1px;background:#e2e2e2"></div>
<div class="a" style="left:88px;top:622px;width:462px;height:46px;background:#fdfdfd"></div>
<div class="a" style="left:96px;top:630px;width:123px;height:30px;background:#fff;border:1px solid #d8d8d8;border-radius:4px"></div>
<div class="t" style="left:96px;top:638px;width:123px;text-align:center;font-size:11.2px;font-weight:bold;color:#222">Clear all and close</div>
<div class="a" style="left:342px;top:630px;width:96px;height:30px;background:#9157a0;border-radius:4px"></div>
<div class="t" style="left:342px;top:638px;width:96px;text-align:center;font-size:11px;font-weight:bold;color:#fff">Save</div>
<div class="a" style="left:446px;top:630px;width:96px;height:30px;background:#fff;border:1px solid #d4d4d4;border-radius:4px"></div>
<div class="t" style="left:446px;top:638px;width:96px;text-align:center;font-size:11px;font-weight:bold;color:#222">Cancel</div>

<div class="a" style="left:547px;top:657px;width:2px;height:2px;background:#b0b0b0"></div><div class="a" style="left:543px;top:661px;width:2px;height:2px;background:#b0b0b0"></div><div class="a" style="left:547px;top:661px;width:2px;height:2px;background:#b0b0b0"></div><div class="a" style="left:539px;top:665px;width:2px;height:2px;background:#b0b0b0"></div><div class="a" style="left:543px;top:665px;width:2px;height:2px;background:#b0b0b0"></div><div class="a" style="left:547px;top:665px;width:2px;height:2px;background:#b0b0b0"></div>
<!-- COLOR POPUP -->
<div class="a" style="left:412px;top:418px;width:138px;height:175px;background:#fff;border-radius:6px;box-shadow:0 3px 14px rgba(0,0,0,0.2)"></div>
<svg class="a" style="left:505px;top:409px" width="20" height="10" viewBox="0 0 20 10"><path d="M0 10 L10 0 L20 10Z" fill="#fff"/></svg>
<div class="a" style="left:429px;top:434px;width:14px;height:14px;background:#fde0e1;border:1px solid rgba(0,0,0,0.16);border-radius:2px"></div><div class="a" style="left:447px;top:434px;width:14px;height:14px;background:#fdabab;border:1px solid rgba(0,0,0,0.16);border-radius:2px"></div><div class="a" style="left:465px;top:434px;width:14px;height:14px;background:#f98585;border:1px solid rgba(0,0,0,0.16);border-radius:2px"></div><div class="a" style="left:483px;top:434px;width:14px;height:14px;background:#f95a5a;border:1px solid rgba(0,0,0,0.16);border-radius:2px"></div><div class="a" style="left:501px;top:434px;width:14px;height:14px;background:#ff2b2b;border:1px solid rgba(0,0,0,0.16);border-radius:2px"></div><div class="a" style="left:519px;top:434px;width:14px;height:14px;background:#ff0000;border:1px solid rgba(0,0,0,0.16);border-radius:2px"></div><div class="a" style="left:429px;top:452px;width:14px;height:14px;background:#fff0e1;border:1px solid rgba(0,0,0,0.16);border-radius:2px"></div><div class="a" style="left:447px;top:452px;width:14px;height:14px;background:#ffd9aa;border:1px solid rgba(0,0,0,0.16);border-radius:2px"></div><div class="a" style="left:465px;top:452px;width:14px;height:14px;background:#ffc985;border:1px solid rgba(0,0,0,0.16);border-radius:2px"></div><div class="a" style="left:483px;top:452px;width:14px;height:14px;background:#ffb256;border:1px solid rgba(0,0,0,0.16);border-radius:2px"></div><div class="a" style="left:501px;top:452px;width:14px;height:14px;background:#ffa22e;border:1px solid rgba(0,0,0,0.16);border-radius:2px"></div><div class="a" style="left:519px;top:452px;width:14px;height:14px;background:#ff9000;border:1px solid rgba(0,0,0,0.16);border-radius:2px"></div><div class="a" style="left:429px;top:470px;width:14px;height:14px;background:#fff8e0;border:1px solid rgba(0,0,0,0.16);border-radius:2px"></div><div class="a" style="left:447px;top:470px;width:14px;height:14px;background:#fff0b0;border:1px solid rgba(0,0,0,0.16);border-radius:2px"></div><div class="a" style="left:465px;top:470px;width:14px;height:14px;background:#ffe880;border:1px solid rgba(0,0,0,0.16);border-radius:2px"></div><div class="a" style="left:483px;top:470px;width:14px;height:14px;background:#ffe055;border:1px solid rgba(0,0,0,0.16);border-radius:2px"></div><div class="a" style="left:501px;top:470px;width:14px;height:14px;background:#ffd822;border:1px solid rgba(0,0,0,0.16);border-radius:2px"></div><div class="a" style="left:519px;top:470px;width:14px;height:14px;background:#ffd500;border:1px solid rgba(0,0,0,0.16);border-radius:2px"></div><div class="a" style="left:429px;top:488px;width:14px;height:14px;background:#bdf0bd;border:1px solid rgba(0,0,0,0.16);border-radius:2px"></div><div class="a" style="left:447px;top:488px;width:14px;height:14px;background:#98e198;border:1px solid rgba(0,0,0,0.16);border-radius:2px"></div><div class="a" style="left:465px;top:488px;width:14px;height:14px;background:#72d272;border:1px solid rgba(0,0,0,0.16);border-radius:2px"></div><div class="a" style="left:483px;top:488px;width:14px;height:14px;background:#4cc84c;border:1px solid rgba(0,0,0,0.16);border-radius:2px"></div><div class="a" style="left:501px;top:488px;width:14px;height:14px;background:#2cc02c;border:1px solid rgba(0,0,0,0.16);border-radius:2px"></div><div class="a" style="left:519px;top:488px;width:14px;height:14px;background:#22a022;border:1px solid rgba(0,0,0,0.16);border-radius:2px"></div><div class="a" style="left:429px;top:506px;width:14px;height:14px;background:#d9e8ff;border:1px solid rgba(0,0,0,0.16);border-radius:2px"></div><div class="a" style="left:447px;top:506px;width:14px;height:14px;background:#b9d8ff;border:1px solid rgba(0,0,0,0.16);border-radius:2px"></div><div class="a" style="left:465px;top:506px;width:14px;height:14px;background:#84c0ff;border:1px solid rgba(0,0,0,0.16);border-radius:2px"></div><div class="a" style="left:483px;top:506px;width:14px;height:14px;background:#52a2ff;border:1px solid rgba(0,0,0,0.16);border-radius:2px"></div><div class="a" style="left:501px;top:506px;width:14px;height:14px;background:#3282ff;border:1px solid rgba(0,0,0,0.16);border-radius:2px"></div><div class="a" style="left:519px;top:506px;width:14px;height:14px;background:#1062f8;border:1px solid rgba(0,0,0,0.16);border-radius:2px"></div><div class="a" style="left:429px;top:524px;width:14px;height:14px;background:#f1e2ff;border:1px solid rgba(0,0,0,0.16);border-radius:2px"></div><div class="a" style="left:447px;top:524px;width:14px;height:14px;background:#e6d0ff;border:1px solid rgba(0,0,0,0.16);border-radius:2px"></div><div class="a" style="left:465px;top:524px;width:14px;height:14px;background:#d8acff;border:1px solid rgba(0,0,0,0.16);border-radius:2px"></div><div class="a" style="left:483px;top:524px;width:14px;height:14px;background:#c284ff;border:1px solid rgba(0,0,0,0.16);border-radius:2px"></div><div class="a" style="left:501px;top:524px;width:14px;height:14px;background:#aa55ff;border:1px solid rgba(0,0,0,0.16);border-radius:2px"></div><div class="a" style="left:519px;top:524px;width:14px;height:14px;background:#9010ff;border:1px solid rgba(0,0,0,0.16);border-radius:2px"></div>
<div class="a" style="left:429px;top:546px;width:104px;height:30px;background:#fff;border:1px solid #d6d6d6;border-radius:4px"></div>
<div class="t" style="left:429px;top:553px;width:104px;text-align:center;font-size:11.2px;font-weight:bold;color:#333">Custom color</div>

<!-- RIGHT DIALOG -->
<div class="a" style="left:609px;top:210px;width:479px;height:566px;background:#f9f9f9;border:1px solid #3c3c3c;box-shadow:0 3px 12px rgba(0,0,0,0.3)"></div>
<div class="a" style="left:610px;top:211px;width:477px;height:30px;background:#fff"></div>
<svg class="a" style="left:617px;top:216px" width="18" height="18" viewBox="0 0 18 18"><circle cx="9" cy="8.8" r="7.3" fill="none" stroke="#9b4fa8" stroke-width="1.5"/><g fill="#9b4fa8"><path d="M4.8 6 Q6.2 3.4 7.6 6Z M10.4 6 Q11.8 3.4 13.2 6Z"/><path d="M3.9 7.2 H7.8 L7.3 11.8 Q6.7 13.6 5.6 13.6 Q4.3 12.2 3.9 7.2Z M14.1 7.2 H10.2 L10.7 11.8 Q11.3 13.6 12.4 13.6 Q13.7 12.2 14.1 7.2Z"/><path d="M9 11.6 L10.6 15.1 H7.4Z"/></g></svg>
<div class="t" style="left:640px;top:218px;font-size:12px;color:#111">Conditional Format on 'Storage Used' column</div>
<svg class="a" style="left:1066px;top:219px" width="12" height="12" viewBox="0 0 12 12"><path d="M1 1 L11 11 M11 1 L1 11" stroke="#222" stroke-width="1.3"/></svg>
<div class="t" style="left:618px;top:253px;line-height:20px;font-size:17px;font-weight:bold;color:#222">Storage Used</div>
<svg class="a" style="left:1043px;top:256px" width="13" height="13" viewBox="0 0 13 13"><path d="M1 2.5 H12 M4.5 2.5 V1 H8.5 V2.5 M2.5 2.5 L3.3 12 H9.7 L10.5 2.5 M5.2 5 V10 M7.8 5 V10" fill="none" stroke="#777" stroke-width="1.1"/></svg>
<div class="t" style="left:1063px;top:254px;font-size:12px;color:#333">(1)</div>
<div class="a" style="left:618px;top:285px;width:461px;height:46px;background:#fff;border:1px solid #e3e3e3;border-radius:5px"></div>
<svg class="a" style="left:633px;top:301px" width="15" height="14" viewBox="0 0 15 14"><rect x="0.6" y="0.6" width="13.8" height="12.8" rx="2" fill="none" stroke="#9b59b6" stroke-width="1.1"/><path d="M3.5 5 H11.5 M3.5 8 H9" stroke="#9b59b6" stroke-width="1.1"/></svg>
<div class="t" style="left:658px;top:300px;font-size:14px;font-weight:bold;color:#222">Text</div>
<svg class="a" style="left:1052px;top:304px" width="13" height="8" viewBox="0 0 13 8"><path d="M1 1 L6.5 6.5 L12 1" fill="none" stroke="#333" stroke-width="1.2"/></svg>
<div class="a" style="left:618px;top:339px;width:461px;height:299px;background:#fff;border:1px solid #e3e3e3;border-radius:5px"></div>
<svg class="a" style="left:633px;top:355px" width="15" height="15" viewBox="0 0 15 15"><rect x="0.6" y="0.6" width="13.8" height="13.8" rx="2" fill="none" stroke="#9b59b6" stroke-width="1.1"/><path d="M6 3.5 L5 11.5 M9.8 3.5 L8.8 11.5 M3.5 6 H11.5 M3.3 9 H11.3" stroke="#9b59b6" stroke-width="1"/></svg>
<div class="t" style="left:658px;top:354px;font-size:14px;font-weight:bold;color:#222">Number</div>
<svg class="a" style="left:1000px;top:356px" width="13" height="13" viewBox="0 0 13 13"><path d="M1 2.5 H12 M4.5 2.5 V1 H8.5 V2.5 M2.5 2.5 L3.3 12 H9.7 L10.5 2.5 M5.2 5 V10 M7.8 5 V10" fill="none" stroke="#777" stroke-width="1.1"/></svg>
<div class="t" style="left:1020px;top:354px;font-size:12px;color:#333">(1)</div>
<svg class="a" style="left:1052px;top:357px" width="13" height="8" viewBox="0 0 13 8"><path d="M1 7 L6.5 1.5 L12 7" fill="none" stroke="#333" stroke-width="1.2"/></svg>
<div class="t" style="left:631px;top:392px;font-size:12px;color:#333">Number is equal to</div><div class="a" style="left:870px;top:384px;width:196px;height:23px;background:#fff;border:1px solid #cfcfcf;border-bottom:1px solid #8a8a8a;border-radius:3px"></div><div class="t" style="left:631px;top:422px;font-size:12px;color:#333">Number is NOT equal to</div><div class="a" style="left:870px;top:414px;width:196px;height:23px;background:#fff;border:1px solid #cfcfcf;border-bottom:1px solid #8a8a8a;border-radius:3px"></div><div class="t" style="left:631px;top:452px;font-size:12px;color:#333">Number is greater than</div><div class="a" style="left:870px;top:444px;width:196px;height:23px;background:#fff;border:1px solid #cfcfcf;border-bottom:1px solid #8a8a8a;border-radius:3px"></div><div class="t" style="left:631px;top:482px;font-size:12px;color:#333">Number is greater than or equal to</div><div class="a" style="left:870px;top:474px;width:196px;height:23px;background:#fff;border:1px solid #cfcfcf;border-bottom:1px solid #8a8a8a;border-radius:3px"></div><div class="t" style="left:631px;top:512px;font-size:12px;color:#333">Number is smaller than</div><div class="a" style="left:870px;top:504px;width:196px;height:23px;background:#fff;border:1px solid #cfcfcf;border-bottom:1px solid #8a8a8a;border-radius:3px"></div><div class="t" style="left:631px;top:542px;font-size:12px;color:#333">Number is smaller than or equal to</div><div class="a" style="left:870px;top:534px;width:196px;height:23px;background:#fff;border:1px solid #cfcfcf;border-bottom:1px solid #8a8a8a;border-radius:3px"></div><div class="t" style="left:879px;top:508px;font-size:11px;color:#333">500000</div>
<div class="a" style="left:631px;top:577px;font-size:10.8px;font-style:italic;color:#333;line-height:18px;white-space:normal;width:440px">Keep in mind that the values you see in the grid might be set to a format which does not represent its 'true' value. Number filters search 'true' values only: the unformatted, unrounded values.</div>
<div class="a" style="left:610px;top:728px;width:477px;height:1px;background:#e2e2e2"></div>
<div class="a" style="left:610px;top:729px;width:477px;height:46px;background:#fdfdfd"></div>
<div class="a" style="left:879px;top:737px;width:96px;height:30px;background:#9157a0;border-radius:4px"></div>
<div class="t" style="left:879px;top:744px;width:96px;text-align:center;font-size:11px;font-weight:bold;color:#fff">Apply</div>
<div class="a" style="left:983px;top:737px;width:96px;height:30px;background:#fff;border:1px solid #d4d4d4;border-radius:4px"></div>
<div class="t" style="left:983px;top:744px;width:96px;text-align:center;font-size:11px;font-weight:bold;color:#222">Close</div>

<div class="a" style="left:1084px;top:764px;width:2px;height:2px;background:#b0b0b0"></div><div class="a" style="left:1080px;top:768px;width:2px;height:2px;background:#b0b0b0"></div><div class="a" style="left:1084px;top:768px;width:2px;height:2px;background:#b0b0b0"></div><div class="a" style="left:1076px;top:772px;width:2px;height:2px;background:#b0b0b0"></div><div class="a" style="left:1080px;top:772px;width:2px;height:2px;background:#b0b0b0"></div><div class="a" style="left:1084px;top:772px;width:2px;height:2px;background:#b0b0b0"></div>
<!-- ANNOTATIONS -->
<svg class="a" style="left:0;top:0;filter:drop-shadow(1px 1px 1.5px rgba(0,0,0,0.3))" width="1298" height="779"><path d="M484 380 L611 248" stroke="#f42aa4" stroke-width="5.5" stroke-linecap="round"/><path d="M619.5 240 L604 245.5 L614.5 255Z" fill="#f42aa4"/></svg>
<div class="a" style="left:524px;top:290px;width:40px;height:40px;border-radius:50%;background:#f42aa4;box-shadow:1px 3px 5px rgba(0,0,0,0.4);color:#fff;font-size:29px;line-height:41px;text-align:center">1</div>
<div class="a" style="left:531px;top:427px;width:40px;height:40px;border-radius:50%;background:#f42aa4;box-shadow:1px 3px 5px rgba(0,0,0,0.4);color:#fff;font-size:29px;line-height:41px;text-align:center">2</div>
<div class="a" style="left:952px;top:340px;width:40px;height:40px;border-radius:50%;background:#f42aa4;box-shadow:1px 3px 5px rgba(0,0,0,0.4);color:#fff;font-size:29px;line-height:41px;text-align:center">3</div>
<div class="a" style="left:994px;top:233px;width:40px;height:40px;border-radius:50%;background:#f42aa4;box-shadow:1px 3px 5px rgba(0,0,0,0.4);color:#fff;font-size:29px;line-height:41px;text-align:center">4</div>
</body></html>
